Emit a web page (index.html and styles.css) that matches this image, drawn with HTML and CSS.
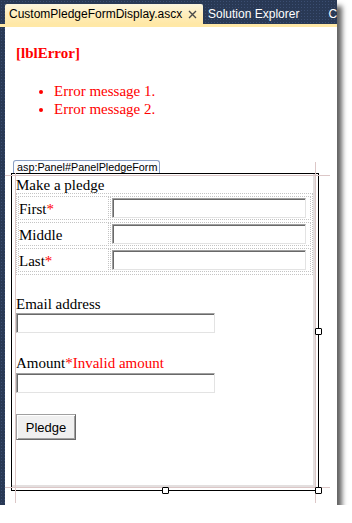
FILE: index.html
```html
<!DOCTYPE html>
<html>
<head>
<meta charset="utf-8">
<link rel="stylesheet" href="styles.css">
</head>
<body>
<div class="window">
  <div class="tabbar">
    <div class="tab tab-active">
      <span class="tab-title">CustomPledgeFormDisplay.ascx</span>
      <svg class="close" width="9" height="9" viewBox="0 0 9 9"><path d="M1 1 L8 8 M8 1 L1 8" stroke="#4a4a4a" stroke-width="1.4" fill="none"/></svg>
    </div>
    <div class="tab tab-plain">Solution Explorer</div>
    <div class="tab tab-next">C</div>
  </div>
  <div class="strip"></div>
  <div class="content">
    <div class="surface">
      <div class="lbl-error">[lblError]</div>
      <ul class="errors">
        <li>Error message 1.</li>
        <li>Error message 2.</li>
      </ul>
      <div class="panel-wrap">
        <div class="guide guide-h guide-top"></div>
        <div class="guide guide-h guide-bottom"></div>
        <div class="guide guide-v guide-left"></div>
        <div class="guide guide-v guide-right"></div>
        <div class="panel-tag">asp:Panel#PanelPledgeForm</div>
        <div class="panel">
          <div class="panel-inner">
            <div class="heading">Make a pledge</div>
            <table class="name-table">
              <tr><td class="lbl">First<span class="req">*</span></td><td class="fld"><div class="textbox"></div></td></tr>
              <tr><td class="lbl">Middle</td><td class="fld"><div class="textbox"></div></td></tr>
              <tr><td class="lbl">Last<span class="req">*</span></td><td class="fld"><div class="textbox"></div></td></tr>
            </table>
            <div class="field-label first">Email address</div>
            <div class="textbox wide"></div>
            <div class="field-label second">Amount<span class="req">*</span><span class="invalid">Invalid amount</span></div>
            <div class="textbox wide gap1"></div>
            <div class="btn">Pledge</div>
          </div>
        </div>
        <div class="handle h-bottom"></div>
        <div class="handle h-corner"></div>
        <div class="handle h-right"></div>
      </div>
    </div>
  </div>
</div>
</body>
</html>
```
FILE: styles.css
```css
html, body {
  margin: 0;
  background: #ffffff;
}

.window {
  width: 337px;
  height: 505px;
  display: flex;
  flex-direction: column;
  background-color: #293955;
  background-image: radial-gradient(circle, #3b4e72 0.6px, transparent 1px);
  background-size: 3px 3px;
  box-shadow: 5px 6px 5px rgba(0, 0, 0, 0.62);
}

.tabbar {
  height: 24px;
  display: flex;
  align-items: flex-end;
  padding-left: 5px;
  overflow: hidden;
  font-family: "Liberation Sans", Arial, sans-serif;
  font-size: 12px;
}

.tab {
  height: 20px;
  line-height: 20px;
  white-space: nowrap;
  flex: none;
}

.tab-active {
  width: 198px;
  box-sizing: border-box;
  padding-left: 4px;
  display: flex;
  align-items: center;
  color: #000;
  background: linear-gradient(#fcf5de, #ffedba 55%, #ffe8a6);
  border-radius: 2px 2px 0 0;
}

.close {
  margin-left: auto;
  margin-right: 6px;
}

.tab-plain {
  color: #ffffff;
  padding-left: 5px;
}

.tab-next {
  color: #ffffff;
  margin-left: 29px;
}

.strip {
  height: 3px;
  background: #ffe8a6;
}

.content {
  flex: 1;
  margin-left: 5px;
  background: #ffffff;
}

.surface {
  padding-top: 17px;
  font-family: "Liberation Serif", "Times New Roman", serif;
  font-size: 15px;
  color: #000;
}

.lbl-error {
  margin-left: 11px;
  color: #ff0000;
  font-weight: bold;
  line-height: 18px;
}

.errors {
  margin: 20px 0 0 11px;
  padding-left: 38px;
  color: #ff0000;
  line-height: 18px;
}

.panel-wrap {
  position: relative;
  margin: 42px 0 0 6px;
  width: 308px;
}

.panel-tag {
  position: relative;
  z-index: 5;
  width: fit-content;
  margin-left: 2px;
  height: 12px;
  line-height: 12px;
  padding: 0 2px 0 3px;
  font-family: "Liberation Sans", Arial, sans-serif;
  font-size: 10.8px;
  color: #000;
  background: #fbfcfe;
  border: 1px solid #8a9fc4;
  border-bottom: none;
  border-radius: 3px 3px 0 0;
}

.panel {
  position: relative;
  z-index: 1;
  width: 306px;
  height: 316px;
  border: 1px solid #000;
}

.panel-inner {
  box-sizing: border-box;
  width: 303px;
  height: 313px;
  padding: 3px 0 0 4px;
  border-right: 2px solid #e3dfdf;
  border-bottom: 2px solid #e3dfdf;
}

.heading {
  line-height: 16px;
}

.name-table {
  border: 1px dotted #c4c4c4;
  border-spacing: 1px 2px;
  width: 297px;
  box-sizing: border-box;
  font-size: 15px;
}

.name-table td {
  border: 1px dotted #c4c4c4;
  box-sizing: border-box;
  padding: 1px;
}

.name-table td.lbl {
  width: 91px;
  padding: 2px 0 0;
  line-height: 20px;
  vertical-align: top;
  height: 24px;
}

.name-table td.fld {
  width: 201px;
  height: 24px;
}

.req {
  color: #ff0000;
}

.invalid {
  color: #ff0000;
}

.textbox {
  width: 194px;
  height: 20px;
  box-sizing: border-box;
  background: #ffffff;
  border: 1px solid;
  border-color: #a0a0a0 #e3e3e3 #e3e3e3 #a0a0a0;
  box-shadow: inset 1px 1px 0 #696969;
}

.textbox.wide {
  width: 199px;
}

.textbox.gap1 {
  margin-top: 1px;
}

.field-label {
  line-height: 17px;
}

.field-label.first {
  margin-top: 21px;
}

.field-label.second {
  margin-top: 22px;
}

.btn {
  margin-top: 21px;
  width: 60px;
  height: 26px;
  box-sizing: border-box;
  display: flex;
  align-items: center;
  justify-content: center;
  font-family: "Liberation Sans", Arial, sans-serif;
  font-size: 13px;
  color: #000;
  background: #f0f0f0;
  border: 1px solid;
  border-color: #a0a0a0 #696969 #696969 #a0a0a0;
  box-shadow: inset 1px 1px 0 #ffffff, inset -1px -1px 0 #a0a0a0;
}

.guide {
  position: absolute;
  background: #dcc7c7;
  z-index: 3;
}

.guide-h {
  left: -6px;
  width: 325px;
  height: 1px;
}

.guide-top {
  top: 15px;
}

.guide-bottom {
  top: 327px;
}

.guide-v {
  top: 2px;
  width: 1px;
  height: 341px;
}

.guide-left {
  left: 4px;
}

.guide-right {
  left: 304px;
}

.handle {
  position: absolute;
  z-index: 6;
  width: 5px;
  height: 5px;
  background: #ffffff;
  border: 1px solid #000;
  border-radius: 1px;
}

.h-bottom {
  left: 151px;
  top: 327px;
}

.h-corner {
  left: 304px;
  top: 327px;
}

.h-right {
  left: 304px;
  top: 168px;
}
```
